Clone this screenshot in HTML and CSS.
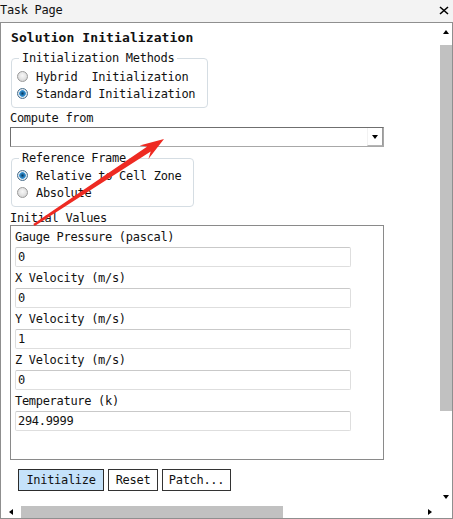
FILE: index.html
```html
<!DOCTYPE html>
<html>
<head>
<meta charset="utf-8">
<link rel="stylesheet" href="styles.css">
</head>
<body>
<div class="page">
  <header class="titlebar">
    <span class="title">Task Page</span>
    <svg class="close" width="10" height="9" viewBox="0 0 10 9"><path d="M1 1 L9 8 M9 1 L1 8" stroke="#000" stroke-width="1.6" fill="none"/></svg>
  </header>
  <div class="panel">
    <div class="content">
      <div class="heading">Solution Initialization</div>
      <fieldset class="group group-methods">
        <legend>Initialization Methods</legend>
        <div class="radio-row"><span class="radio"></span><span class="rtext">Hybrid  Initialization</span></div>
        <div class="radio-row"><span class="radio checked"></span><span class="rtext">Standard Initialization</span></div>
      </fieldset>
      <div class="label label-compute">Compute from</div>
      <div class="dropdown"><span class="dd-btn"><span class="tri-down"></span></span></div>
      <fieldset class="group group-frame">
        <legend>Reference Frame</legend>
        <div class="radio-row"><span class="radio checked"></span><span class="rtext">Relative to Cell Zone</span></div>
        <div class="radio-row"><span class="radio"></span><span class="rtext">Absolute</span></div>
      </fieldset>
      <div class="label label-values">Initial Values</div>
      <div class="values">
        <div class="field-label">Gauge Pressure (pascal)</div>
        <div class="input">0</div>
        <div class="field-label">X Velocity (m/s)</div>
        <div class="input">0</div>
        <div class="field-label">Y Velocity (m/s)</div>
        <div class="input">1</div>
        <div class="field-label">Z Velocity (m/s)</div>
        <div class="input">0</div>
        <div class="field-label">Temperature (k)</div>
        <div class="input">294.9999</div>
      </div>
      <div class="buttons">
        <div class="btn btn-primary btn-init">Initialize</div>
        <div class="btn btn-reset">Reset</div>
        <div class="btn btn-patch">Patch...</div>
      </div>
    </div>
    <div class="vscroll">
      <div class="sb-arrow"><span class="tri-up"></span></div>
      <div class="vtrack"><div class="vthumb"></div></div>
      <div class="sb-arrow"><span class="tri-down"></span></div>
    </div>
    <div class="hscroll">
      <div class="sb-harrow"><span class="tri-left"></span></div>
      <div class="htrack"><div class="hthumb"></div></div>
      <div class="sb-harrow"><span class="tri-right"></span></div>
    </div>
    <div class="corner"></div>
  </div>
  <svg class="annot" width="453" height="519" viewBox="0 0 453 519">
    <polygon points="33.3,224.0 147.3,146.4 139.6,145.5 164,139 148.4,158.9 150.7,151.4 34.7,226.0" fill="#ee2a22"/>
  </svg>
</div>
</body>
</html>
```
FILE: styles.css
```css
html, body {
  margin: 0;
  padding: 0;
  background: #ffffff;
}
body {
  font-family: "DejaVu Sans Mono", "Liberation Mono", monospace;
  font-size: 12px;
  letter-spacing: -0.3px;
  color: #111;
}
.page {
  position: relative;
  width: 453px;
  height: 519px;
  overflow: hidden;
}
.titlebar {
  height: 22px;
  background: #f3f3f3;
  display: flex;
  align-items: center;
  justify-content: space-between;
  padding: 0 4px 0 0;
  box-sizing: border-box;
}
.title {
  line-height: 14px;
  margin-top: -2px;
}
.close {
  display: block;
  margin-top: -2px;
}
.panel {
  height: 497px;
  box-sizing: border-box;
  border: 1px solid #8f8f8f;
  display: grid;
  grid-template-columns: 1fr 12px;
  grid-template-rows: 1fr 13px;
  background: #fff;
}
.content {
  padding: 7px 0 0 9px;
  overflow: hidden;
}
.heading {
  font-weight: bold;
  font-size: 13px;
  letter-spacing: 0.1px;
  line-height: 16px;
  margin-left: 1px;
}
.group {
  margin: 0 0 0 1px;
  border: 1px solid #d5dde3;
  border-radius: 4px;
  min-width: 0;
  box-sizing: border-box;
}
.group legend {
  padding: 0 3px;
  margin-left: 2px;
  line-height: 14px;
}
.group-methods {
  width: 197px;
  margin-top: 5px;
  padding: 3px 4px 5px 5px;
}
.group-frame {
  width: 183px;
  margin-top: 4px;
  padding: 2px 4px 5px 5px;
}
.radio-row {
  display: flex;
  align-items: center;
  height: 17px;
}
.rtext {
  white-space: pre;
  margin-left: 8px;
}
.radio {
  width: 11px;
  height: 11px;
  box-sizing: border-box;
  border-radius: 50%;
  border: 1px solid #9a9a9a;
  background: radial-gradient(circle at 50% 40%, #f7f7f7 0, #e6e6e6 45%, #c9c9c9 100%);
}
.radio.checked {
  border-color: #4a6f8c;
  background: radial-gradient(circle, #0c3a5c 0, #1d6ea8 1.6px, #3d97d6 3px, #dfe9f1 3.6px, #cfd6dc 100%);
}
.label {
  margin-left: 1px;
}
.label-compute {
  line-height: 16px;
  margin-top: 2px;
  margin-left: 0;
}
.label-values {
  line-height: 14px;
  margin-top: 4px;
  margin-left: 0;
}
.dropdown {
  margin-top: 1px;
  width: 374px;
  height: 20px;
  box-sizing: border-box;
  border: 1px solid #6f6f6f;
  border-right-color: #a8a8a8;
  border-bottom-color: #a8a8a8;
  display: flex;
  justify-content: flex-end;
  background: #fff;
}
.dd-btn {
  width: 16px;
  box-sizing: border-box;
  border-left: 1px solid #f2f2f2;
  border-right: 1px solid #9a9a9a;
  border-bottom: 1px solid #b5b5b5;
  display: flex;
  align-items: center;
  justify-content: center;
}
.tri-down {
  width: 0;
  height: 0;
  border-left: 3.5px solid transparent;
  border-right: 3.5px solid transparent;
  border-top: 4px solid #000;
}
.tri-up {
  width: 0;
  height: 0;
  border-left: 3.5px solid transparent;
  border-right: 3.5px solid transparent;
  border-bottom: 4px solid #000;
}
.tri-left {
  width: 0;
  height: 0;
  border-top: 3.5px solid transparent;
  border-bottom: 3.5px solid transparent;
  border-right: 4px solid #000;
}
.tri-right {
  width: 0;
  height: 0;
  border-top: 3.5px solid transparent;
  border-bottom: 3.5px solid transparent;
  border-left: 4px solid #000;
}
.values {
  width: 374px;
  box-sizing: border-box;
  border: 1px solid #8a8a8a;
  padding: 3px 0 28px 4px;
}
.field-label {
  line-height: 16px;
  margin-top: 3px;
}
.field-label:first-child {
  margin-top: 0;
}
.input {
  margin-top: 2px;
  width: 336px;
  height: 20px;
  box-sizing: border-box;
  border: 1px solid #dedede;
  border-top-color: #c9c9c9;
  border-radius: 2px;
  padding-left: 2px;
  line-height: 18px;
}
.buttons {
  display: flex;
  gap: 4px;
  margin-top: 9px;
  margin-left: 8px;
}
.btn {
  height: 22px;
  box-sizing: border-box;
  border: 1px solid #333;
  background: #fff;
  display: flex;
  align-items: center;
  justify-content: center;
  line-height: 20px;
}
.btn-primary {
  background: #c5e2fa;
  border-color: #2c2c2c;
}
.btn-init { width: 86px; }
.btn-reset { width: 50px; }
.btn-patch { width: 69px; }
.vscroll {
  display: flex;
  flex-direction: column;
}
.sb-arrow {
  height: 17px;
  display: flex;
  align-items: center;
  justify-content: center;
}
.vtrack {
  flex: 1;
}
.vthumb {
  margin-top: 5px;
  height: 366px;
  background: #c1c1c1;
}
.hscroll {
  display: flex;
  align-items: stretch;
}
.sb-harrow {
  width: 20px;
  display: flex;
  align-items: center;
  justify-content: center;
}
.htrack {
  flex: 1;
  padding-top: 1px;
}
.hthumb {
  width: 262px;
  height: 12px;
  background: #c1c1c1;
}
.corner {
  background: #fff;
}
.annot {
  position: absolute;
  left: 0;
  top: 0;
  pointer-events: none;
}
```
